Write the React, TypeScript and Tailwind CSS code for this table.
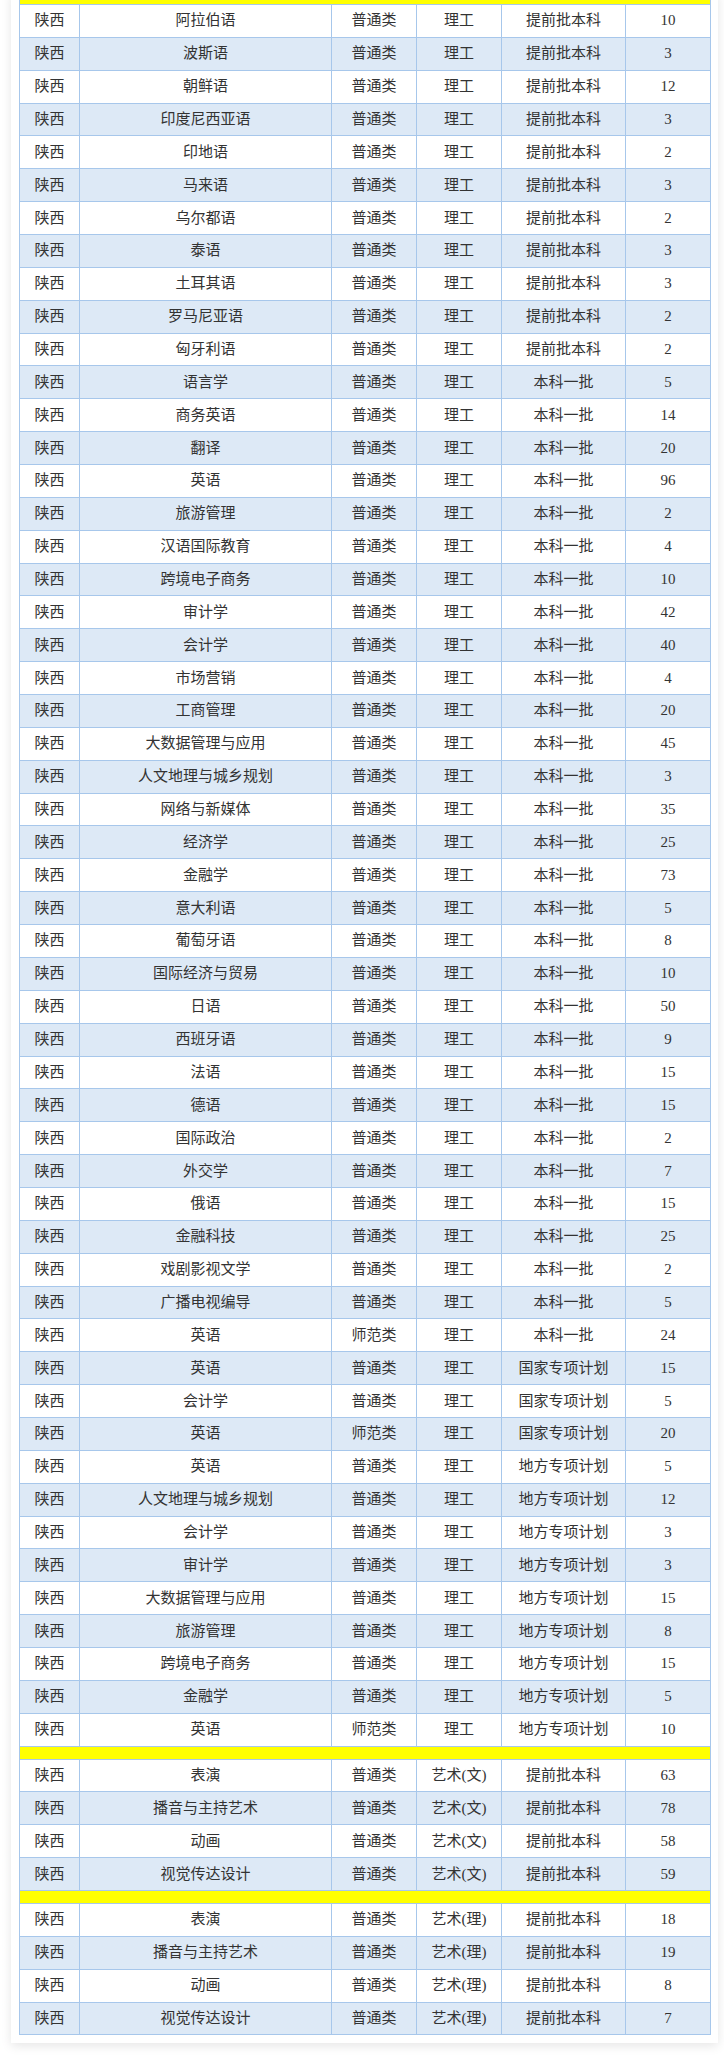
import React from 'react';

type Row = [string, string, string, string, number];

const G = '普通类';
const S = '师范类';
const L = '理工';

const section1: Row[] = [
  ['阿拉伯语', G, L, '提前批本科', 10],
  ['波斯语', G, L, '提前批本科', 3],
  ['朝鲜语', G, L, '提前批本科', 12],
  ['印度尼西亚语', G, L, '提前批本科', 3],
  ['印地语', G, L, '提前批本科', 2],
  ['马来语', G, L, '提前批本科', 3],
  ['乌尔都语', G, L, '提前批本科', 2],
  ['泰语', G, L, '提前批本科', 3],
  ['土耳其语', G, L, '提前批本科', 3],
  ['罗马尼亚语', G, L, '提前批本科', 2],
  ['匈牙利语', G, L, '提前批本科', 2],
  ['语言学', G, L, '本科一批', 5],
  ['商务英语', G, L, '本科一批', 14],
  ['翻译', G, L, '本科一批', 20],
  ['英语', G, L, '本科一批', 96],
  ['旅游管理', G, L, '本科一批', 2],
  ['汉语国际教育', G, L, '本科一批', 4],
  ['跨境电子商务', G, L, '本科一批', 10],
  ['审计学', G, L, '本科一批', 42],
  ['会计学', G, L, '本科一批', 40],
  ['市场营销', G, L, '本科一批', 4],
  ['工商管理', G, L, '本科一批', 20],
  ['大数据管理与应用', G, L, '本科一批', 45],
  ['人文地理与城乡规划', G, L, '本科一批', 3],
  ['网络与新媒体', G, L, '本科一批', 35],
  ['经济学', G, L, '本科一批', 25],
  ['金融学', G, L, '本科一批', 73],
  ['意大利语', G, L, '本科一批', 5],
  ['葡萄牙语', G, L, '本科一批', 8],
  ['国际经济与贸易', G, L, '本科一批', 10],
  ['日语', G, L, '本科一批', 50],
  ['西班牙语', G, L, '本科一批', 9],
  ['法语', G, L, '本科一批', 15],
  ['德语', G, L, '本科一批', 15],
  ['国际政治', G, L, '本科一批', 2],
  ['外交学', G, L, '本科一批', 7],
  ['俄语', G, L, '本科一批', 15],
  ['金融科技', G, L, '本科一批', 25],
  ['戏剧影视文学', G, L, '本科一批', 2],
  ['广播电视编导', G, L, '本科一批', 5],
  ['英语', S, L, '本科一批', 24],
  ['英语', G, L, '国家专项计划', 15],
  ['会计学', G, L, '国家专项计划', 5],
  ['英语', S, L, '国家专项计划', 20],
  ['英语', G, L, '地方专项计划', 5],
  ['人文地理与城乡规划', G, L, '地方专项计划', 12],
  ['会计学', G, L, '地方专项计划', 3],
  ['审计学', G, L, '地方专项计划', 3],
  ['大数据管理与应用', G, L, '地方专项计划', 15],
  ['旅游管理', G, L, '地方专项计划', 8],
  ['跨境电子商务', G, L, '地方专项计划', 15],
  ['金融学', G, L, '地方专项计划', 5],
  ['英语', S, L, '地方专项计划', 10],
];

const section2: Row[] = [
  ['表演', G, '艺术(文)', '提前批本科', 63],
  ['播音与主持艺术', G, '艺术(文)', '提前批本科', 78],
  ['动画', G, '艺术(文)', '提前批本科', 58],
  ['视觉传达设计', G, '艺术(文)', '提前批本科', 59],
];

const section3: Row[] = [
  ['表演', G, '艺术(理)', '提前批本科', 18],
  ['播音与主持艺术', G, '艺术(理)', '提前批本科', 19],
  ['动画', G, '艺术(理)', '提前批本科', 8],
  ['视觉传达设计', G, '艺术(理)', '提前批本科', 7],
];

const cell = 'border border-[#a7c7eb] p-0 text-center align-middle';

const Divider = () => (
  <tr className="h-[13px]">
    <td colSpan={6} className="border border-[#a7c7eb] bg-[#ffff00] p-0" />
  </tr>
);

const Section = ({ rows }: { rows: Row[] }) => (
  <>
    {rows.map((r, i) => (
      <tr key={i} className={`h-[32.87px] ${i % 2 === 1 ? 'bg-[#dde9f6]' : 'bg-white'}`}>
        <td className={cell}>陕西</td>
        <td className={cell}>{r[0]}</td>
        <td className={cell}>{r[1]}</td>
        <td className={cell}>{r[2]}</td>
        <td className={cell}>{r[3]}</td>
        <td className={cell}>{r[4]}</td>
      </tr>
    ))}
  </>
);

export default function App() {
  return (
    <div className="min-h-screen bg-white pl-[11px] pr-[6px] pb-4 overflow-hidden">
      {/* page is scrolled: the first yellow bar is mostly cut off */}
      <div className="-mt-[9px] bg-white px-[8px] pb-[8px] shadow-[0_3px_10px_rgba(0,0,0,0.10)]">
        <table className="w-[691px] table-fixed border-collapse text-[15px] leading-none text-[#333] font-['Liberation_Serif','Noto_Sans_CJK_SC',serif]">
          <colgroup>
            <col className="w-[60px]" />
            <col className="w-[252px]" />
            <col className="w-[85px]" />
            <col className="w-[85px]" />
            <col className="w-[124px]" />
            <col className="w-[85px]" />
          </colgroup>
          <tbody>
            <Divider />
            <Section rows={section1} />
            <Divider />
            <Section rows={section2} />
            <Divider />
            <Section rows={section3} />
          </tbody>
        </table>
      </div>
    </div>
  );
}
